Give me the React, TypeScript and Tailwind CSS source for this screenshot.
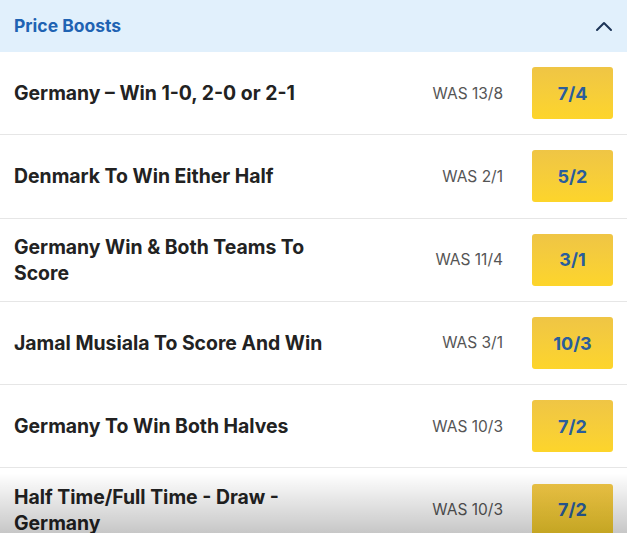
import React from "react";

const rows = [
  { title: "Germany – Win 1-0, 2-0 or 2-1", was: "WAS 13/8", odds: "7/4" },
  { title: "Denmark To Win Either Half", was: "WAS 2/1", odds: "5/2" },
  { title: "Germany Win & Both Teams To Score", was: "WAS 11/4", odds: "3/1" },
  { title: "Jamal Musiala To Score And Win", was: "WAS 3/1", odds: "10/3" },
  { title: "Germany To Win Both Halves", was: "WAS 10/3", odds: "7/2" },
  { title: "Half Time/Full Time - Draw - Germany", was: "WAS 10/3", odds: "7/2" },
];

export default function App() {
  return (
    <div
      className="relative w-[627px] h-[533px] overflow-hidden bg-white"
      style={{ fontFamily: "Inter, 'Noto Sans', sans-serif" }}
    >
      <div className="flex h-[52px] items-center justify-between bg-[#e1f0fc] pl-[14px] pr-[14px]">
        <span className="text-[17.5px] font-bold text-[#1f63b3]">Price Boosts</span>
        <svg width="18" height="12" viewBox="0 0 18 12" fill="none">
          <path d="M2 10 L9 3 L16 10" stroke="#1d3557" strokeWidth="2" strokeLinecap="round" strokeLinejoin="round" />
        </svg>
      </div>
      <div className="flex flex-col">
        {rows.map((r, i) => (
          <div
            key={i}
            className="flex h-[83.3px] shrink-0 items-center border-b border-[#e6e6e6] pl-[14px] pr-[14px]"
          >
            <div className="flex-1">
              <div className="max-w-[330px] text-[19.4px] font-bold leading-[26px] text-[#222]">
                {r.title}
              </div>
            </div>
            <span className="mr-[29px] text-[15.5px] text-[#555]">{r.was}</span>
            <div className="flex h-[52px] w-[81px] items-center justify-center rounded-[3px] bg-gradient-to-b from-[#efc545] to-[#fdd52a] text-[18px] font-bold text-[#2a5d9c]">
              {r.odds}
            </div>
          </div>
        ))}
      </div>
      <div className="pointer-events-none absolute bottom-0 left-0 right-0 h-[60px] bg-gradient-to-b from-transparent to-[#00000038]" />
    </div>
  );
}
